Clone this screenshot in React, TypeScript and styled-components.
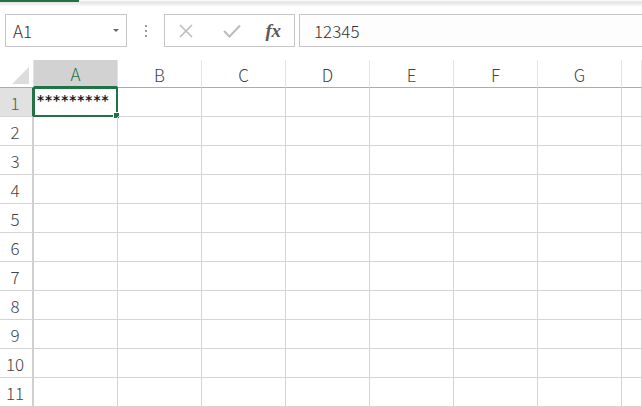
import React from "react";
import styled, { createGlobalStyle } from "styled-components";

const Global = createGlobalStyle`
  html, body { margin: 0; padding: 0; background: #fff; }
  body { font-family: "Noto Sans CJK JP", "Noto Sans", sans-serif; overflow: hidden; }
`;

const Page = styled.div`
  width: 642px;
  height: 407px;
  overflow: hidden;
  display: flex;
  flex-direction: column;
  background: #fff;
`;

const TopStrip = styled.div`
  height: 7px;
  background: linear-gradient(#ffffff 0px, #e3e3e3 2px, #f4f4f4 5px, #ffffff 7px);
  display: flex;
`;

const TabIndicator = styled.div`
  width: 79px;
  height: 2px;
  background: #217346;
`;

const FormulaBar = styled.div`
  display: flex;
  align-items: stretch;
  height: 33px;
  margin: 7px 0 13px 5px;
`;

const NameBox = styled.div`
  width: 122px;
  box-sizing: border-box;
  border: 1px solid #c6c6c6;
  display: flex;
  align-items: center;
  justify-content: space-between;
  padding: 0 6px 0 7px;
  font-size: 17px;
  font-weight: 300;
  color: #333;
`;

const Caret = styled.div`
  width: 0;
  height: 0;
  border-left: 3px solid transparent;
  border-right: 3px solid transparent;
  border-top: 3px solid #666;
  margin-right: 1px;
`;

const Dots = styled.div`
  width: 37px;
  display: flex;
  flex-direction: column;
  align-items: center;
  justify-content: center;
  gap: 3px;
`;

const Dot = styled.span`
  width: 2px;
  height: 2px;
  background: #9a9a9a;
`;

const ButtonBox = styled.div`
  width: 131px;
  box-sizing: border-box;
  border: 1px solid #c6c6c6;
  display: flex;
  align-items: center;
  margin-right: 4px;
`;

const IconSlot = styled.div<{ $w: number }>`
  width: ${(p) => p.$w}px;
  display: flex;
  align-items: center;
  justify-content: center;
`;

const Fx = styled.span`
  font-family: "Liberation Serif", "DejaVu Serif", serif;
  font-style: italic;
  font-weight: bold;
  font-size: 19px;
  color: #5a5a5a;
  letter-spacing: -0.5px;
`;

const FormulaInput = styled.div`
  flex: 1;
  box-sizing: border-box;
  border: 1px solid #c6c6c6;
  border-right: none;
  display: flex;
  align-items: center;
  padding-left: 14px;
  font-size: 17px;
  font-weight: 300;
  color: #333;
  background: #fdfdfd;
`;

const Grid = styled.div`
  display: grid;
  grid-template-columns: 34px repeat(7, 84px) 1fr;
  grid-template-rows: 28px repeat(11, 29px);
`;

const Corner = styled.div`
  box-sizing: border-box;
  border-bottom: 1px solid #ababab;
  border-right: 1px solid #e3e3e3;
  position: relative;
  background: #fff;
  &::after {
    content: "";
    position: absolute;
    right: 4px;
    bottom: 3px;
    width: 0;
    height: 0;
    border-left: 17px solid transparent;
    border-bottom: 17px solid #dcdcdc;
  }
`;

const ColHeader = styled.div<{ $sel?: boolean }>`
  box-sizing: border-box;
  border-right: 1px solid #e3e3e3;
  border-bottom: ${(p) => (p.$sel ? "2px solid #217346" : "1px solid #ababab")};
  background: ${(p) => (p.$sel ? "#d2d2d2" : "#fff")};
  color: ${(p) => (p.$sel ? "#217346" : "#444")};
  font-size: 17px;
  font-weight: 300;
  display: flex;
  align-items: center;
  justify-content: center;
  padding-top: 1px;
`;

const RowHeader = styled.div<{ $sel?: boolean }>`
  box-sizing: border-box;
  border-bottom: 1px solid #d4d4d4;
  border-right: ${(p) => (p.$sel ? "2px solid #217346" : "2px solid #d0d0d0")};
  background: ${(p) => (p.$sel ? "#e1e1e1" : "#fff")};
  color: ${(p) => (p.$sel ? "#217346" : "#444")};
  font-size: 17px;
  font-weight: 300;
  display: flex;
  align-items: center;
  justify-content: center;
  padding-right: 2px;
`;

const Cell = styled.div`
  box-sizing: border-box;
  border-right: 1px solid #d4d4d4;
  border-bottom: 1px solid #d4d4d4;
  position: relative;
`;

const Selection = styled.div`
  position: absolute;
  left: -1px;
  top: -1px;
  right: -1px;
  bottom: -1px;
  border: 2px solid #217346;
  pointer-events: none;
  &::after {
    content: "";
    position: absolute;
    right: -4px;
    bottom: -4px;
    width: 5px;
    height: 5px;
    background: #217346;
    border: 1px solid #fff;
  }
`;

const Masked = styled.span`
  position: absolute;
  left: 3px;
  top: 4px;
  font-family: "DejaVu Sans", sans-serif;
  font-weight: bold;
  font-size: 13.5px;
  line-height: 16px;
  letter-spacing: 1px;
  color: #1a1a1a;
`;

const cols = ["A", "B", "C", "D", "E", "F", "G", ""];
const rows = Array.from({ length: 11 }, (_, i) => i + 1);

export default function App() {
  return (
    <Page>
      <Global />
      <TopStrip>
        <TabIndicator />
      </TopStrip>
      <FormulaBar>
        <NameBox>
          <span>A1</span>
          <Caret />
        </NameBox>
        <Dots>
          <Dot />
          <Dot />
          <Dot />
        </Dots>
        <ButtonBox>
          <IconSlot $w={42}>
            <svg width="14" height="14" viewBox="0 0 14 14">
              <path d="M1 1 L13 13 M13 1 L1 13" stroke="#bdbdbd" strokeWidth="1.6" fill="none" />
            </svg>
          </IconSlot>
          <IconSlot $w={50}>
            <svg width="18" height="14" viewBox="0 0 18 14">
              <path d="M1 7 L6.5 12.5 L17 1.5" stroke="#bdbdbd" strokeWidth="2" fill="none" />
            </svg>
          </IconSlot>
          <IconSlot $w={32}>
            <Fx>fx</Fx>
          </IconSlot>
        </ButtonBox>
        <FormulaInput>12345</FormulaInput>
      </FormulaBar>
      <Grid>
        <Corner />
        {cols.map((c, i) => (
          <ColHeader key={"h" + i} $sel={c === "A"}>
            {c}
          </ColHeader>
        ))}
        {rows.map((r) => (
          <React.Fragment key={r}>
            <RowHeader $sel={r === 1}>{r}</RowHeader>
            {cols.map((c, i) => (
              <Cell key={r + "-" + i}>
                {r === 1 && c === "A" && (
                  <>
                    <Masked>*********</Masked>
                    <Selection />
                  </>
                )}
              </Cell>
            ))}
          </React.Fragment>
        ))}
      </Grid>
    </Page>
  );
}
